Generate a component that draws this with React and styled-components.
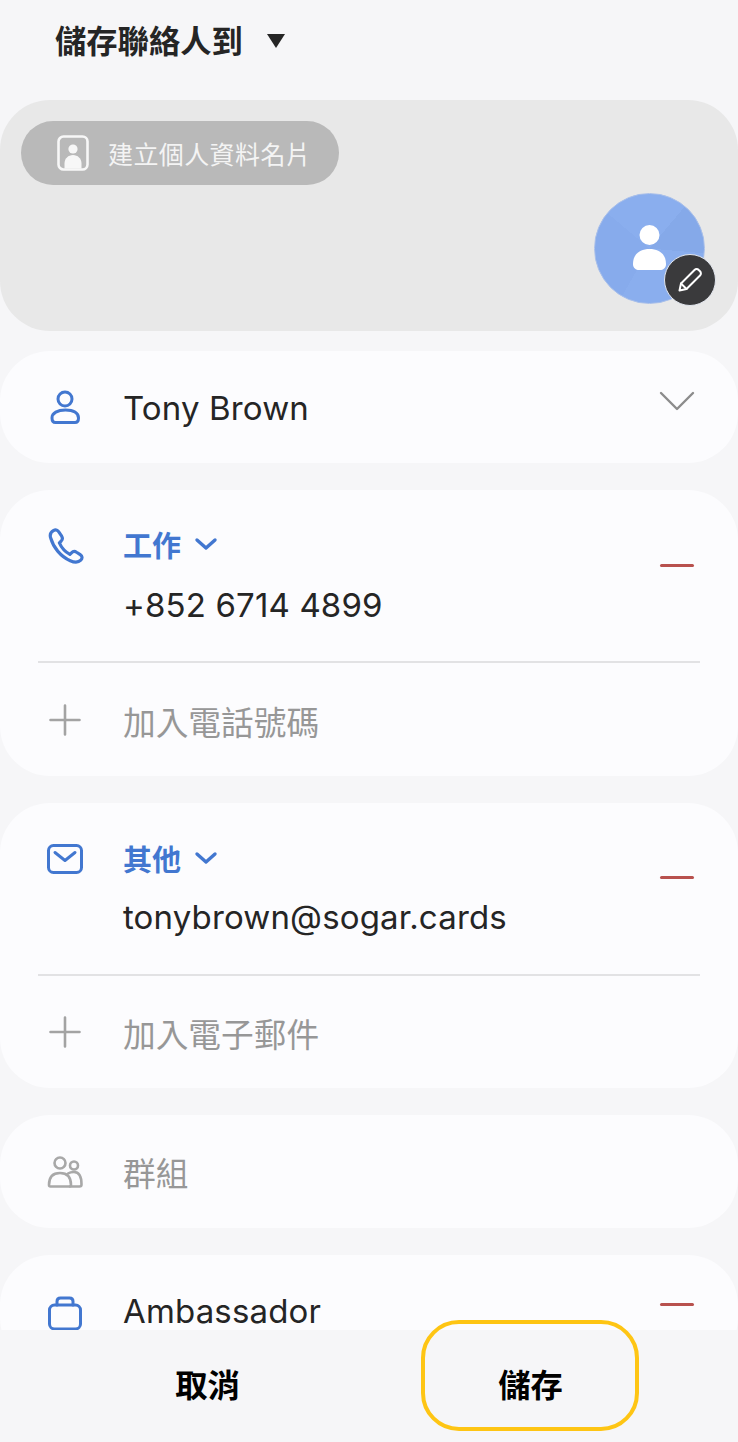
import * as React from 'react';
import styled, { createGlobalStyle } from 'styled-components';

const FONT = `Inter, "Noto Sans CJK TC", sans-serif`;
const BLUE = '#4277d0';

const GlobalStyle = createGlobalStyle`
   html, body { margin: 0; padding: 0; background: #f6f6f8; }
   * { box-sizing: border-box; }
`;

const Page = styled.div`
   position: relative;
   display: flex;
   flex-direction: column;
   width: 738px;
   height: 1442px;
   background: #f6f6f8;
   font-family: ${FONT};
   overflow: hidden;
`;

const Header = styled.header`
   display: flex;
   align-items: center;
   gap: 24px;
   flex: none;
   height: 100px;
   padding: 0 0 22px 55px;
   font-size: 31.3px;
   font-weight: 700;
   color: #252525;
`;

const Caret = styled.span`
   width: 0;
   height: 0;
   margin-top: 4px;
   border-left: 9px solid transparent;
   border-right: 9px solid transparent;
   border-top: 14px solid #252525;
`;

const Scroller = styled.main`
   flex: 1;
   min-height: 0;
   overflow: hidden;
`;

const ProfileCard = styled.section`
   display: flex;
   flex-direction: column;
   justify-content: space-between;
   height: 231px;
   padding: 21px 23px 27px 21px;
   background: #e8e8e8;
   border-radius: 50px;
`;

const ProfileButton = styled.div`
   display: flex;
   align-items: center;
   gap: 19px;
   align-self: flex-start;
   width: 318px;
   height: 64px;
   padding-left: 36px;
   background: #b9b9b9;
   border-radius: 32px;
   font-size: 25px;
   letter-spacing: 0.4px;
   color: #f4f4f4;
`;

const AvatarWrap = styled.div`
   position: relative;
   align-self: flex-end;
   width: 111px;
   height: 111px;
   margin-right: 10px;
`;

const Avatar = styled.div`
   width: 100%;
   height: 100%;
   border-radius: 50%;
   border: 1px solid #a8bfea;
   background: conic-gradient(from 40deg, #85a9e9 0 55deg, #8aaeee 55deg 170deg, #87abec 170deg 270deg, #8aaeee 270deg 360deg);
   overflow: hidden;
`;

const EditBadge = styled.div`
   position: absolute;
   right: -11px;
   bottom: -2px;
   display: flex;
   align-items: center;
   justify-content: center;
   width: 52px;
   height: 52px;
   border-radius: 50%;
   background: #3a3a3c;
   border: 1px solid #e2e6ee;
`;

const Card = styled.section`
   margin-top: ${(p) => p.$top || 27}px;
   padding: 0 38px;
   background: #fcfcfe;
   border-radius: 50px;
`;

const Row = styled.div`
   display: grid;
   grid-template-columns: 85px 1fr auto;
   align-items: ${(p) => (p.$top ? 'start' : 'center')};
   height: ${(p) => p.$height}px;
   padding-top: ${(p) => p.$pad || 0}px;
`;

const IconCell = styled.div`
   display: flex;
   margin-top: ${(p) => p.$offset || 0}px;
   padding-left: 9px;
`;

const Value = styled.div`
   margin-top: ${(p) => p.$nudge || 0}px;
   font-size: ${(p) => (p.$muted ? 32.7 : 33)}px;
   line-height: 40px;
   letter-spacing: ${(p) => (p.$muted ? 0 : 0.15)}px;
   color: ${(p) => (p.$muted ? '#979797' : '#252525')};
   white-space: nowrap;
`;

const Label = styled.div`
   display: flex;
   align-items: center;
   gap: 13px;
   height: 40px;
   margin-bottom: ${(p) => p.$gap}px;
   font-size: 29px;
   font-weight: 700;
   color: ${BLUE};
`;

const Minus = styled.span`
   display: block;
   width: 34px;
   height: 3px;
   margin: ${(p) => p.$top || 0}px 6px ${(p) => p.$bottom || 0}px 0;
   border-radius: 2px;
   background: #b8514e;
`;

const Divider = styled.hr`
   margin: 0;
   border: 0;
   border-top: 2px solid #e2e2e4;
`;

const Chevron = styled.svg`
   display: block;
   margin: ${(p) => p.$margin || 0};
   fill: none;
   stroke: ${(p) => p.$color};
   stroke-width: ${(p) => p.$weight};
   stroke-linecap: round;
   stroke-linejoin: round;
`;

const Footer = styled.footer`
   display: grid;
   grid-template-columns: 1fr 1fr;
   flex: none;
   height: 112px;
   padding: 0 46px;
   background: #f6f6f8;
`;

const FooterButton = styled.div`
   display: flex;
   align-items: center;
   justify-content: center;
   padding-bottom: 6px;
   font-size: 32.3px;
   font-weight: 700;
   color: #000;
`;

const SaveHighlight = styled.div`
   position: absolute;
   left: 421px;
   top: 1320px;
   width: 218px;
   height: 111px;
   border: 4px solid #fec514;
   border-radius: 38px;
   pointer-events: none;
`;

const StrokeIcon = ({ size = 36, color = BLUE, weight = 3, children }) => (
   <svg width={size} height={size} viewBox="0 0 36 36" fill="none" stroke={color} strokeWidth={weight} strokeLinecap="round" strokeLinejoin="round">
      {children}
   </svg>
);

const Plus = () => (
   <StrokeIcon color="#a3a3a3" weight={2.6}>
      <path d="M18 3.500v29M3.500 18h29" />
   </StrokeIcon>
);

const ContactField = ({ icon, iconTop, label, value, addLabel, pad, gap, minusTop, addHeight }) => (
   <>
      <Row $height={171} $top $pad={pad}>
         <IconCell $offset={iconTop}>{icon}</IconCell>
         <div>
            <Label $gap={gap}>
               {label}
               <Chevron width="24" height="14" viewBox="0 0 24 14" $color={BLUE} $weight={3.4}>
                  <path d="M3 3l9 8 9-8" />
               </Chevron>
            </Label>
            <Value>{value}</Value>
         </div>
         <Minus $top={minusTop} />
      </Row>
      <Divider />
      <Row $height={addHeight}>
         <IconCell>
            <Plus />
         </IconCell>
         <Value $muted $nudge={6}>{addLabel}</Value>
      </Row>
   </>
);

export default function App() {
   return (
      <Page>
         <GlobalStyle />
         <Header>
            儲存聯絡人到
            <Caret />
         </Header>
         <Scroller>
            <ProfileCard>
               <ProfileButton>
                  <svg width="32" height="36" viewBox="0 0 32 36">
                     <rect x="1.500" y="1.500" width="29" height="33" rx="5" fill="none" stroke="#f7f7f7" strokeWidth="2.6" />
                     <circle cx="16" cy="14" r="4.600" fill="#f7f7f7" />
                     <path d="M7.500 33.500v-5c0-5 3.800-8.500 8.500-8.500s8.500 3.500 8.500 8.500v5z" fill="#f7f7f7" />
                  </svg>
                  建立個人資料名片
               </ProfileButton>
               <AvatarWrap>
                  <Avatar>
                     <svg width="109" height="109" viewBox="0 0 109 109">
                        <circle cx="54.500" cy="41" r="10" fill="#fff" />
                        <path d="M38 70c0-10 7-15 16.500-15S71 60 71 70c0 4-3 6-6 6H44c-3 0-6-2-6-6z" fill="#fff" />
                     </svg>
                  </Avatar>
                  <EditBadge>
                     <svg width="28" height="28" viewBox="0 0 28 28" fill="none" stroke="#fff" strokeWidth="2" strokeLinejoin="round" strokeLinecap="round">
                        <path d="M3.500 24.500l1.500-7L18.500 4c1.300-1.300 3-1.300 4.200 0l1.300 1.300c1.200 1.200 1.200 3 0 4.200L10.500 23z" />
                        <path d="M5 17.500l5.500 5.500" />
                     </svg>
                  </EditBadge>
               </AvatarWrap>
            </ProfileCard>

            <Card $top={20}>
               <Row $height={112}>
                  <IconCell>
                     <StrokeIcon>
                        <circle cx="18" cy="10" r="7" />
                        <path d="M5 29c0-5 5.500-8 13.500-8s13 3 13 8c0 3-1.500 4.500-3.500 4.500H8.500C6.500 33.500 5 32 5 29z" />
                     </StrokeIcon>
                  </IconCell>
                  <Value $nudge={2}>Tony Brown</Value>
                  <Chevron width="36" height="22" viewBox="0 0 36 22" $color="#8c8c8c" $weight={2.4} $margin="0 5px 12px 0">
                     <path d="M2 3l16 16L34 3" />
                  </Chevron>
               </Row>
            </Card>

            <Card>
               <ContactField
                  icon={
                     <StrokeIcon size={38}>
                        <path d="M6 2.500c-2.500 1.500-3.500 4-2.500 7 2.500 9 9.500 17.500 18.500 21.500 3.500 1.500 7.500 2 10-.5 1.800-1.800 1.500-4-.5-5.300l-3.500-2.200c-1.800-1.200-3.500-.8-4.800.5l-1.500 1.500c-4.500-2.500-8-6.500-10-11l1.800-1.700c1.200-1.200 1.300-3 .4-4.500L11 3.500C9.800 1.800 7.800 1.400 6 2.500z" />
                     </StrokeIcon>
                  }
                  iconTop={4}
                  label="工作"
                  value="+852 6714 4899"
                  addLabel="加入電話號碼"
                  pad={34}
                  gap={21}
                  minusTop={40}
                  addHeight={113}
               />
            </Card>

            <Card>
               <ContactField
                  icon={
                     <StrokeIcon>
                        <rect x="1.500" y="4.500" width="33" height="27" rx="5" />
                        <path d="M8 11.500l10 8 10-8" />
                     </StrokeIcon>
                  }
                  iconTop={3}
                  label="其他"
                  value="tonybrown@sogar.cards"
                  addLabel="加入電子郵件"
                  pad={35}
                  gap={19}
                  minusTop={38}
                  addHeight={112}
               />
            </Card>

            <Card>
               <Row $height={113}>
                  <IconCell $offset={2}>
                     <StrokeIcon color="#a8a8a8" weight={2.6}>
                        <circle cx="13" cy="8" r="5.500" />
                        <circle cx="27" cy="10.500" r="4" />
                        <path d="M2 30c0-8 4-12 11-12s11 4 11 12c0 1-.5 1.500-1.500 1.500h-19C2.500 31.500 2 31 2 30z" />
                        <path d="M21 18.500c1.500-1 3.500-1.500 6-1.500 4.500 0 7.500 3 7.500 12.500 0 1.300-.5 2-2 2H23" />
                     </StrokeIcon>
                  </IconCell>
                  <Value $muted $nudge={5}>群組</Value>
               </Row>
            </Card>

            <Card>
               <Row $height={113}>
                  <IconCell $offset={2}>
                     <StrokeIcon>
                        <rect x="2.500" y="10" width="31" height="24" rx="5" />
                        <path d="M10 10V6.500C10 4 11.500 3 13.500 3h9c2 0 3.500 1 3.500 3.500V10" />
                     </StrokeIcon>
                  </IconCell>
                  <Value $nudge={-2}>Ambassador</Value>
                  <Minus $bottom={14} />
               </Row>
            </Card>
         </Scroller>
         <Footer>
            <FooterButton>取消</FooterButton>
            <FooterButton>儲存</FooterButton>
         </Footer>
         <SaveHighlight />
      </Page>
   );
}
